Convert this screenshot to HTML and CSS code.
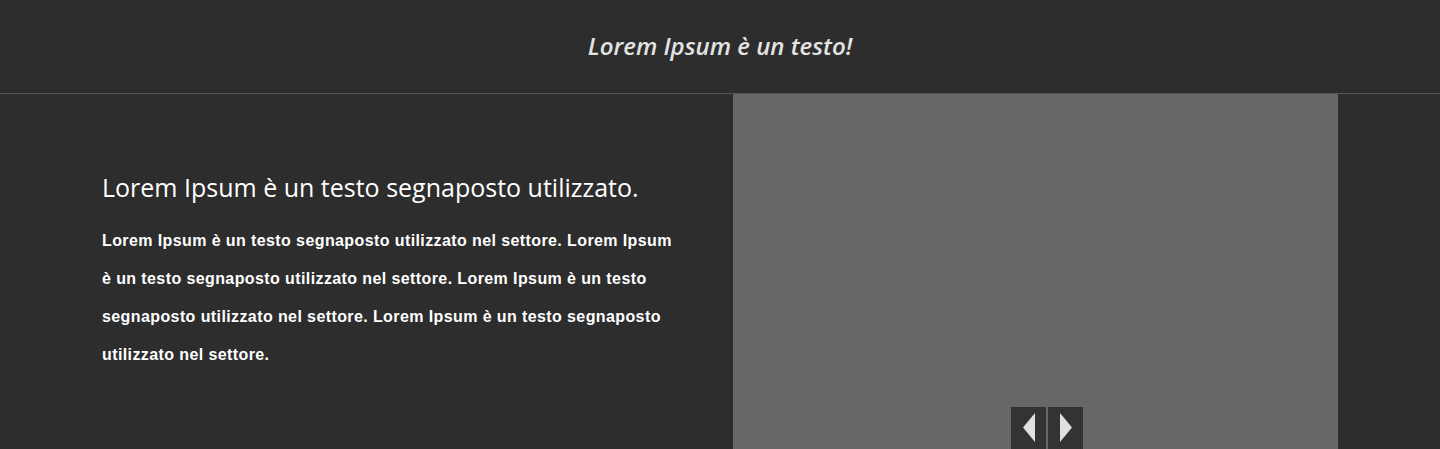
FILE: index.html
```html
<!DOCTYPE html>
<html lang="it">
<head>
<meta charset="utf-8">
<title>Lorem Ipsum</title>
<link rel="stylesheet" href="styles.css">
</head>
<body>
<header class="top">
  <h1 class="title">Lorem Ipsum è un testo!</h1>
</header>
<main class="main">
  <section class="text-col">
    <h2 class="heading">Lorem Ipsum è un testo segnaposto utilizzato.</h2>
    <p class="body">Lorem Ipsum è un testo segnaposto utilizzato nel settore. Lorem Ipsum è un testo segnaposto utilizzato nel settore. Lorem Ipsum è un testo segnaposto utilizzato nel settore. Lorem Ipsum è un testo segnaposto utilizzato nel settore.</p>
  </section>
  <section class="media">
    <div class="controls">
      <button class="ctrl" aria-label="Precedente">
        <svg width="12" height="29" viewBox="0 0 12 29"><polygon points="12,0 12,29 0,14.5" fill="#e0e0e0"/></svg>
      </button>
      <button class="ctrl" aria-label="Successivo">
        <svg width="12" height="29" viewBox="0 0 12 29"><polygon points="0,0 0,29 12,14.5" fill="#e0e0e0"/></svg>
      </button>
    </div>
  </section>
  <div class="right-space"></div>
</main>
</body>
</html>
```

FILE: styles.css
```css
* { box-sizing: border-box; }
html, body {
  margin: 0;
  padding: 0;
  background: #2d2d2d;
  height: 449px;
  overflow: hidden;
}
.top {
  height: 94px;
  border-bottom: 1px solid #555555;
  display: flex;
  align-items: center;
  justify-content: center;
}
.title {
  margin: 0;
  padding-bottom: 2px;
  font-family: "Open Sans", sans-serif;
  font-style: italic;
  font-weight: 600;
  font-size: 24px;
  color: #e3e3e3;
}
.main {
  display: flex;
  height: 355px;
}
.text-col {
  width: 733px;
  padding: 78px 40px 0 102px;
}
.heading {
  margin: 0;
  font-family: "Open Sans", sans-serif;
  font-weight: 400;
  font-size: 25px;
  line-height: 30px;
  color: #ffffff;
}
.body {
  margin: 20px 0 0;
  font-family: "Liberation Sans", Arial, sans-serif;
  font-weight: 700;
  font-size: 16px;
  letter-spacing: 0.4px;
  line-height: 38px;
  color: #ffffff;
  width: 580px;
}
.media {
  width: 605px;
  background: #676767;
  display: flex;
  justify-content: center;
  align-items: flex-end;
  padding-left: 23px;
}
.controls {
  display: flex;
  gap: 2px;
}
.ctrl {
  width: 35px;
  height: 42px;
  border: 0;
  margin: 0;
  padding: 6px 0 0;
  background: #333333;
  display: flex;
  justify-content: center;
  align-items: flex-start;
  cursor: pointer;
}
.right-space { flex: 1; }
```
